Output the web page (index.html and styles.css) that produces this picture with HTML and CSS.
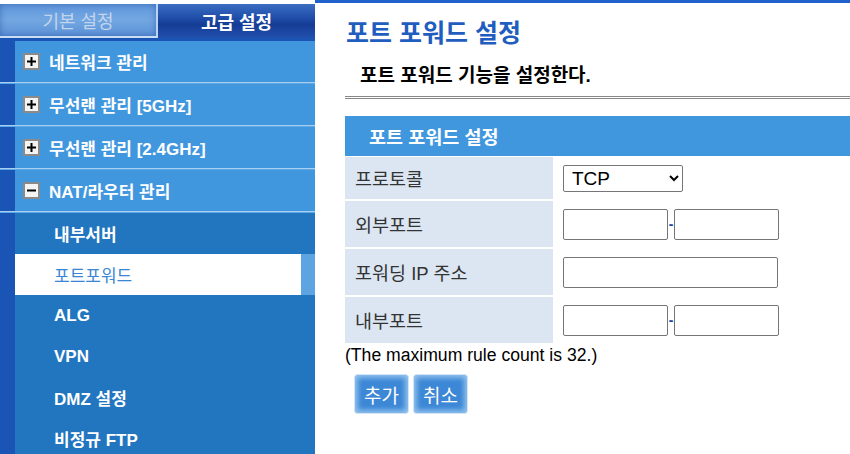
FILE: index.html
```html
<!DOCTYPE html>
<html lang="ko">
<head>
<meta charset="utf-8">
<title>포트 포워드 설정</title>
<link rel="stylesheet" href="styles.css">
</head>
<body>
<div class="page">
  <aside class="sidebar">
    <div class="tabs">
      <div class="tab tab-basic">기본 설정</div>
      <div class="tab tab-adv">고급 설정</div>
    </div>
    <nav class="menu">
      <div class="menu-item"><svg class="toggle" width="17" height="17" viewBox="0 0 17 17"><rect x="1" y="1" width="15" height="15" fill="#f4f4f4" stroke="#8a8a8a" stroke-width="2"/><path d="M4 8.5H13M8.5 4V13" stroke="#000" stroke-width="2"/></svg>네트워크 관리</div>
      <div class="sep"></div>
      <div class="menu-item"><svg class="toggle" width="17" height="17" viewBox="0 0 17 17"><rect x="1" y="1" width="15" height="15" fill="#f4f4f4" stroke="#8a8a8a" stroke-width="2"/><path d="M4 8.5H13M8.5 4V13" stroke="#000" stroke-width="2"/></svg>무선랜 관리 [5GHz]</div>
      <div class="sep"></div>
      <div class="menu-item"><svg class="toggle" width="17" height="17" viewBox="0 0 17 17"><rect x="1" y="1" width="15" height="15" fill="#f4f4f4" stroke="#8a8a8a" stroke-width="2"/><path d="M4 8.5H13M8.5 4V13" stroke="#000" stroke-width="2"/></svg>무선랜 관리 [2.4GHz]</div>
      <div class="sep"></div>
      <div class="menu-item"><svg class="toggle" width="17" height="17" viewBox="0 0 17 17"><rect x="1" y="1" width="15" height="15" fill="#f4f4f4" stroke="#8a8a8a" stroke-width="2"/><path d="M4 8.5H13" stroke="#000" stroke-width="2"/></svg>NAT/라우터 관리</div>
      <div class="sep"></div>
      <div class="sub-item">내부서버</div>
      <div class="sub-item active">포트포워드</div>
      <div class="sub-item">ALG</div>
      <div class="sub-item">VPN</div>
      <div class="sub-item">DMZ 설정</div>
      <div class="sub-item">비정규 FTP</div>
    </nav>
  </aside>
  <main class="main">
    <h1 class="title">포트 포워드 설정</h1>
    <p class="subtitle">포트 포워드 기능을 설정한다.</p>
    <div class="rule"></div>
    <div class="form">
      <div class="form-head">포트 포워드 설정</div>
      <div class="row row-first">
        <div class="label">프로토콜</div>
        <div class="value">
          <select class="select"><option>TCP</option><option>UDP</option><option>TCP/UDP</option></select>
        </div>
      </div>
      <div class="row">
        <div class="label">외부포트</div>
        <div class="value"><input class="port" type="text"><span class="dash">-</span><input class="port" type="text"></div>
      </div>
      <div class="row">
        <div class="label">포워딩 IP 주소</div>
        <div class="value"><input class="ip" type="text"></div>
      </div>
      <div class="row">
        <div class="label">내부포트</div>
        <div class="value"><input class="port" type="text"><span class="dash">-</span><input class="port" type="text"></div>
      </div>
    </div>
    <p class="note">(The maximum rule count is 32.)</p>
    <div class="buttons">
      <button class="btn" type="button">추가</button>
      <button class="btn" type="button">취소</button>
    </div>
  </main>
</div>
</body>
</html>
```

FILE: styles.css
```css
html, body {
  margin: 0;
  padding: 0;
  background: #fff;
  overflow: hidden;
}
body {
  font-family: "Liberation Sans", "Noto Sans CJK KR", sans-serif;
  width: 850px;
  height: 454px;
}
.page {
  display: flex;
  height: 454px;
  overflow: hidden;
}
.sidebar {
  width: 315px;
  flex-shrink: 0;
  padding-top: 4px;
  display: flex;
  flex-direction: column;
  background: #fff;
}
.tabs {
  display: flex;
  height: 34px;
  flex-shrink: 0;
}
.tab {
  display: flex;
  align-items: center;
  justify-content: center;
  font-size: 18px;
  box-sizing: border-box;
}
.tab-basic {
  width: 158px;
  color: #c3d5ec;
  background: linear-gradient(to bottom, #5f97dc, #73a7e2 50%, #5c92d8);
  border-right: 2px solid #b9d3f0;
  border-bottom: 2px solid #c9def4;
  box-shadow: inset 0 0 6px rgba(30, 70, 150, 0.5);
}
.tab-adv {
  width: 157px;
  color: #fff;
  font-weight: bold;
  background: linear-gradient(to bottom, #3a6dc2, #1d4aa6 45%, #153c95 60%, #2150ad);
}
.menu {
  flex: 1;
  background: #1a55b6;
  padding-top: 3px;
  display: flex;
  flex-direction: column;
}
.menu-item {
  flex-shrink: 0;
  margin-left: 15px;
  height: 41px;
  background: #4197de;
  display: flex;
  align-items: center;
  padding-left: 8px;
  gap: 9px;
  color: #fff;
  font-weight: bold;
  font-size: 17px;
}
.toggle {
  flex-shrink: 0;
}
.sep {
  flex-shrink: 0;
  height: 2px;
  background: linear-gradient(to bottom, #a6cff2 50%, #5fa8e6 50%);
}
.sub-item {
  flex-shrink: 0;
  margin-left: 15px;
  height: 41px;
  background: #2176bf;
  display: flex;
  align-items: center;
  padding-left: 39px;
  color: #fff;
  font-weight: bold;
  font-size: 17px;
}
.sub-item.active {
  background: linear-gradient(to left, #5ea4e0 14px, #fff 14px);
  color: #3a86d4;
  font-weight: normal;
}
.main {
  flex: 1;
  border-top: 3px solid #2062cc;
  padding-left: 30px;
  display: flex;
  flex-direction: column;
}
.title {
  margin: 15px 0 0 1px;
  font-size: 25px;
  line-height: 30px;
  color: #1f5dbe;
  font-weight: bold;
}
.subtitle {
  margin: 16px 0 0 15px;
  font-size: 19px;
  line-height: 24px;
  font-weight: bold;
  color: #000;
}
.rule {
  margin-top: 8px;
  height: 0;
  border-top: 3px double #888;
}
.form {
  margin-top: 17px;
  display: flex;
  flex-direction: column;
}
.form-head {
  height: 40px;
  background: #4197dd;
  color: #fff;
  font-weight: bold;
  font-size: 18.5px;
  display: flex;
  align-items: center;
  padding-left: 24px;
}
.row {
  display: grid;
  grid-template-columns: 208px 1fr;
  height: 46px;
  margin-top: 2px;
}
.row-first {
  height: 42px;
  margin-top: 1px;
}
.label {
  background: #dbe6f2;
  color: #333;
  font-size: 18.5px;
  display: flex;
  align-items: center;
  padding-left: 10px;
}
.value {
  display: flex;
  align-items: center;
  padding-left: 10px;
}
.select {
  width: 120px;
  height: 27px;
  font-family: "Liberation Sans", sans-serif;
  font-size: 19px;
  color: #000;
  background: #fff;
  border: 1px solid #767676;
  border-radius: 2px;
  padding: 0 0 0 4px;
  box-sizing: border-box;
}
.port, .ip {
  height: 31px;
  box-sizing: border-box;
  border: 1px solid #767676;
  border-radius: 2px;
  background: #fff;
  margin: 0;
  padding: 0 4px;
  font-size: 16px;
}
.port {
  width: 105px;
}
.ip {
  width: 215px;
}
.dash {
  width: 6px;
  text-align: center;
  color: #17479a;
  font-size: 14px;
  font-weight: bold;
}
.note {
  margin: 3px 0 0 0;
  font-size: 17.6px;
  line-height: 18px;
  color: #000;
}
.buttons {
  display: flex;
  gap: 4px;
  margin: 10px 0 0 9px;
}
.btn {
  width: 55px;
  height: 40px;
  border: 1px solid #d3e5f6;
  border-radius: 4px;
  background: #3c87d6;
  box-shadow: inset 0 0 5px 3px #8fc0ec;
  color: #fff;
  font-family: "Noto Sans CJK KR", sans-serif;
  font-size: 19px;
  padding: 0;
}
```
